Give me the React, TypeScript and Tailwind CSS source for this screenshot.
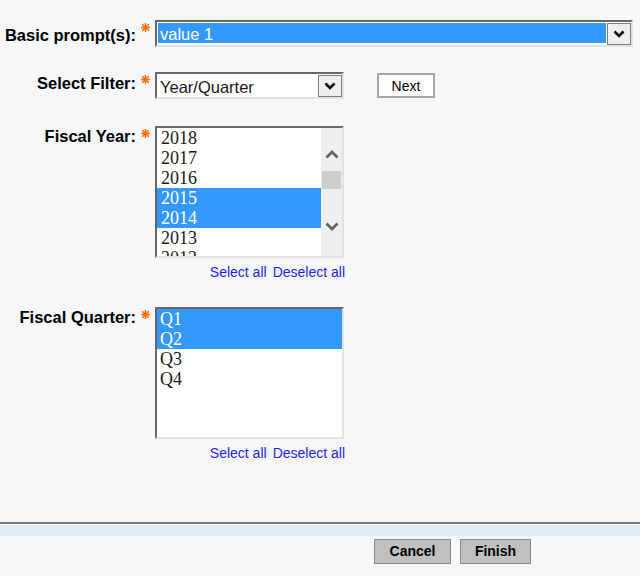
import React from "react";

const years = ["2018", "2017", "2016", "2015", "2014", "2013", "2012"];
const quarters = ["Q1", "Q2", "Q3", "Q4"];

function Star() {
  return (
    <svg width="9" height="9" viewBox="0 0 9 9" className="block">
      <g stroke="#ff6a00" strokeWidth="1.6" strokeLinecap="round">
        <line x1="4.5" y1="0.5" x2="4.5" y2="8.5" />
        <line x1="0.5" y1="4.5" x2="8.5" y2="4.5" />
        <line x1="1.7" y1="1.7" x2="7.3" y2="7.3" />
        <line x1="7.3" y1="1.7" x2="1.7" y2="7.3" />
      </g>
    </svg>
  );
}

function DropButton() {
  return (
    <span className="w-[24px] h-full border border-[#7f7f7f] bg-[#efefef] flex items-center justify-center">
      <svg width="12" height="8" viewBox="0 0 12 8">
        <polyline points="1.5,1.5 6,6 10.5,1.5" fill="none" stroke="#000" strokeWidth="2.6" />
      </svg>
    </span>
  );
}

function Chevron({ up }: { up?: boolean }) {
  return (
    <svg width="14" height="9" viewBox="0 0 14 9" className="block mx-auto">
      <polyline
        points={up ? "1.5,7.5 7,2 12.5,7.5" : "1.5,1.5 7,7 12.5,1.5"}
        fill="none"
        stroke="#636363"
        strokeWidth="2.8"
      />
    </svg>
  );
}

function Label({ text, pad }: { text: string; pad: string }) {
  return (
    <>
      <div className={"w-[136px] text-right font-bold text-[16.5px] leading-[20px] text-black whitespace-nowrap " + pad}>{text}</div>
      <div className="w-[19px] pl-[5px] pt-[3px]">
        <Star />
      </div>
    </>
  );
}

function Links() {
  return (
    <div className="mt-[6px] flex justify-end gap-[6px] text-[14px] leading-[16px] text-[#1f1ff5] w-[190px]">
      <span>Select all</span>
      <span>Deselect all</span>
    </div>
  );
}

export default function App() {
  return (
    <div className="w-[640px] h-[576px] bg-[#f6f7f9] flex flex-col font-['Liberation_Sans',Arial,sans-serif]">
      <div className="flex-1 pt-[20px]">
        {/* basic prompt */}
        <div className="flex items-start">
          <Label text="Basic prompt(s):" pad="pt-[5px]" />
          <div className="w-[478px] h-[27px] border-2 border-t-[#686868] border-l-[#686868] border-b-[#e2e2e2] border-r-[#e2e2e2] bg-white pt-[1px] pl-[1px] flex">
            <span className="flex-1 h-[20px] bg-[#3399ff] text-white text-[16.5px] leading-[23px] pl-[2px] mr-[1px]">value 1</span>
            <DropButton />
          </div>
        </div>

        {/* select filter */}
        <div className="flex items-start mt-[25px]">
          <Label text="Select Filter:" pad="pt-[1px]" />
          <div className="w-[189px] h-[27px] border-2 border-t-[#686868] border-l-[#686868] border-b-[#e2e2e2] border-r-[#e2e2e2] bg-white pt-[1px] pl-[1px] flex">
            <span className="flex-1 h-[20px] text-[#1a1a1a] text-[16.5px] leading-[25px] pl-[2px] mr-[1px] whitespace-nowrap">Year/Quarter</span>
            <DropButton />
          </div>
          <button className="ml-[33px] mt-[1px] w-[58px] h-[25px] border-2 border-[#a6a6a6] bg-white text-[14px] leading-[18px] text-black">
            Next
          </button>
        </div>

        {/* fiscal year */}
        <div className="flex items-start mt-[27px]">
          <Label text="Fiscal Year:" pad="pt-[0px]" />
          <div className="flex flex-col">
            <div className="w-[189px] h-[132px] border-2 border-t-[#686868] border-l-[#686868] border-b-[#e2e2e2] border-r-[#e2e2e2] bg-white flex overflow-hidden">
              <div className="flex-1 font-['Liberation_Serif','Times_New_Roman',serif] text-[18px] leading-[20px]">
                {years.map((y) => {
                  const sel = y === "2015" || y === "2014";
                  return (
                    <div key={y} className={"h-[20px] pl-[4px] " + (sel ? "bg-[#3399ff] text-white" : "text-[#1a1a1a]")}>
                      {y}
                    </div>
                  );
                })}
              </div>
              <div className="w-[21px] bg-[#efefef] pt-[22px]">
                <Chevron up />
                <div className="mt-[12px] mx-[1px] h-[18px] bg-[#cdcdcd]" />
                <div className="mt-[33px]">
                  <Chevron />
                </div>
              </div>
            </div>
            <Links />
          </div>
        </div>

        {/* fiscal quarter */}
        <div className="flex items-start mt-[27px]">
          <Label text="Fiscal Quarter:" pad="pt-[0px]" />
          <div className="flex flex-col">
            <div className="w-[189px] h-[132px] border-2 border-t-[#686868] border-l-[#686868] border-b-[#e2e2e2] border-r-[#e2e2e2] bg-white overflow-hidden font-['Liberation_Serif','Times_New_Roman',serif] text-[18px] leading-[20px]">
              {quarters.map((q) => {
                const sel = q === "Q1" || q === "Q2";
                return (
                  <div key={q} className={"h-[20px] pl-[3px] " + (sel ? "bg-[#3399ff] text-white" : "text-[#1a1a1a]")}>
                    {q}
                  </div>
                );
              })}
            </div>
            <Links />
          </div>
        </div>
      </div>

      {/* footer */}
      <div>
        <div className="h-[2px] bg-[#7a7a7a]" />
        <div className="h-[1px] bg-white" />
        <div className="h-[11px] bg-[#e0edf8]" />
        <div className="pt-[3px] pb-[12px] pr-[109px] flex justify-end gap-[9px]">
          <button className="w-[77px] h-[25px] border border-[#8a8a8a] bg-[#c0c0c0] font-bold text-[14px] text-black">Cancel</button>
          <button className="w-[71px] h-[25px] border border-[#8a8a8a] bg-[#c0c0c0] font-bold text-[14px] text-black">Finish</button>
        </div>
      </div>
    </div>
  );
}
